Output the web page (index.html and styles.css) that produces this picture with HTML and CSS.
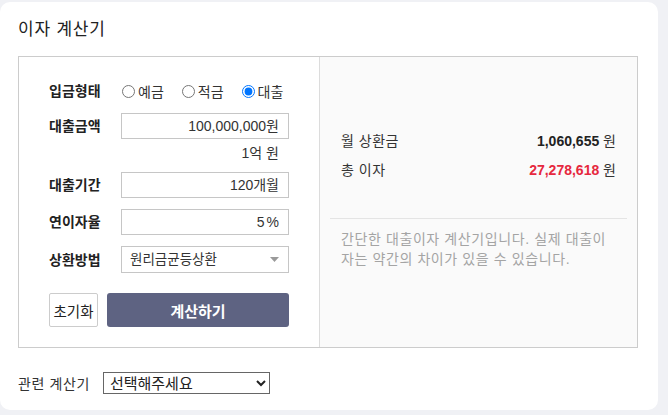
FILE: index.html
```html
<!DOCTYPE html>
<html lang="ko">
<head>
<meta charset="utf-8">
<title>이자 계산기</title>
<link rel="stylesheet" href="styles.css">
</head>
<body>
<div class="card">
  <h1 class="title">이자 계산기</h1>
  <div class="calc">
    <div class="form">
      <div class="row radio-row">
        <span class="label">입금형태</span>
        <div class="radios">
          <label class="radio"><input type="radio" name="kind"><span>예금</span></label>
          <label class="radio"><input type="radio" name="kind"><span>적금</span></label>
          <label class="radio"><input type="radio" name="kind" checked><span>대출</span></label>
        </div>
      </div>
      <div class="row">
        <span class="label">대출금액</span>
        <div class="field"><span class="num">100,000,000</span><span class="unit">원</span></div>
      </div>
      <div class="note">1억 원</div>
      <div class="row">
        <span class="label">대출기간</span>
        <div class="field"><span class="num">120</span><span class="unit">개월</span></div>
      </div>
      <div class="row gap">
        <span class="label">연이자율</span>
        <div class="field"><span class="num">5</span><span class="pct">%</span></div>
      </div>
      <div class="row gap">
        <span class="label">상환방법</span>
        <div class="field select-field">
          <span>원리금균등상환</span>
          <svg class="caret" width="9" height="5" viewBox="0 0 9 5"><path d="M0 0H9L4.5 5Z" fill="#9a9a9a"/></svg>
        </div>
      </div>
      <div class="buttons">
        <button class="btn-reset" type="button">초기화</button>
        <button class="btn-calc" type="button">계산하기</button>
      </div>
    </div>
    <div class="result">
      <div class="res-row"><span class="res-label">월 상환금</span><span><b class="val">1,060,655</b> 원</span></div>
      <div class="res-row"><span class="res-label">총 이자</span><span><b class="val red">27,278,618</b> 원</span></div>
      <div class="divider"></div>
      <p class="notice">간단한 대출이자 계산기입니다. 실제 대출이자는 약간의 차이가 있을 수 있습니다.</p>
    </div>
  </div>
  <div class="related">
    <span class="related-label">관련 계산기</span>
    <select class="related-select">
      <option>선택해주세요</option>
    </select>
  </div>
</div>
</body>
</html>
```
FILE: styles.css
```css
html, body {
  margin: 0;
  padding: 0;
}
body {
  background: #f0f1f5;
  font-family: "Liberation Sans", "Noto Sans CJK KR", sans-serif;
  color: #222;
}
.card {
  box-sizing: border-box;
  width: 658px;
  height: 408px;
  margin: 2px 0 0 0;
  background: #fff;
  border-radius: 10px;
  padding: 16px 18px 0 18px;
}
.title {
  margin: 0 0 14px 0;
  font-size: 17px;
  line-height: 24px;
  letter-spacing: 0.8px;
  font-weight: normal;
  color: #222;
}
.calc {
  display: flex;
  width: 620px;
  box-sizing: border-box;
  border: 1px solid #cccccc;
}
.form {
  box-sizing: border-box;
  width: 301px;
  padding: 21px 30px 20px 30px;
  border-right: 1px solid #dcdcdc;
  display: flex;
  flex-direction: column;
}
.row {
  display: flex;
  align-items: center;
}
.row.gap {
  margin-top: 11px;
}
.radio-row {
  height: 26px;
  margin-bottom: 9px;
}
.label {
  width: 72px;
  flex: none;
  font-size: 14px;
  font-weight: bold;
  color: #222;
  line-height: 20px;
}
.radios {
  display: flex;
  gap: 17px;
  align-items: center;
}
.radio {
  display: flex;
  align-items: center;
  font-size: 14px;
  color: #333;
}
.radio input {
  width: 13px;
  height: 13px;
  margin: 0 3px 0 1px;
}
.field {
  box-sizing: border-box;
  width: 168px;
  height: 26px;
  border: 1px solid #c6c6c6;
  background: #fff;
  display: flex;
  align-items: center;
  justify-content: flex-end;
  padding: 0 9px;
  font-size: 14px;
  color: #333;
  line-height: 20px;
}
.unit {
  font-size: 14px;
}
.pct {
  margin-left: 2px;
}
.select-field {
  height: 27px;
  justify-content: space-between;
  padding: 0 9px 0 8px;
  font-size: 13.5px;
}
.caret {
  display: block;
}
.note {
  box-sizing: border-box;
  height: 33px;
  padding: 4px 10px 0 0;
  text-align: right;
  font-size: 14px;
  line-height: 20px;
  color: #333;
}
.buttons {
  display: flex;
  gap: 9px;
  margin-top: 20px;
  height: 34px;
}
.btn-reset {
  box-sizing: border-box;
  width: 49px;
  height: 34px;
  padding: 0;
  border: 1px solid #cccccc;
  border-radius: 2px;
  background: #fff;
  font-family: inherit;
  font-size: 14.5px;
  color: #222;
}
.btn-calc {
  flex: 1;
  height: 34px;
  border: 0;
  border-radius: 3px;
  background: #5e6382;
  color: #fff;
  font-family: inherit;
  font-size: 15px;
  font-weight: bold;
}
.result {
  flex: 1;
  background: #fafafa;
  padding: 70px 10px 0 10px;
}
.res-row {
  display: flex;
  justify-content: space-between;
  padding: 0 11px;
  line-height: 29px;
  font-size: 14px;
  color: #333;
}
.res-label {
  letter-spacing: 0.5px;
}
.val {
  color: #222;
}
.val.red {
  color: #e6283e;
}
.divider {
  margin-top: 33px;
  height: 1px;
  background: #e4e4e4;
}
.notice {
  margin: 10px 0 0 0;
  padding: 0 11px;
  width: 270px;
  font-size: 14px;
  line-height: 20px;
  letter-spacing: 0.6px;
  color: #a4a4a4;
}
.related {
  display: flex;
  align-items: center;
  margin-top: 24px;
  gap: 13px;
}
.related-label {
  font-size: 14px;
  letter-spacing: 0.6px;
  color: #333;
}
.related-select {
  box-sizing: border-box;
  width: 167px;
  height: 22px;
  border: 1px solid #666;
  border-radius: 0;
  background: #fff;
  font-family: "Liberation Sans", "Noto Sans CJK KR", sans-serif;
  font-size: 15px;
  color: #222;
  padding: 0 2px;
}
```
